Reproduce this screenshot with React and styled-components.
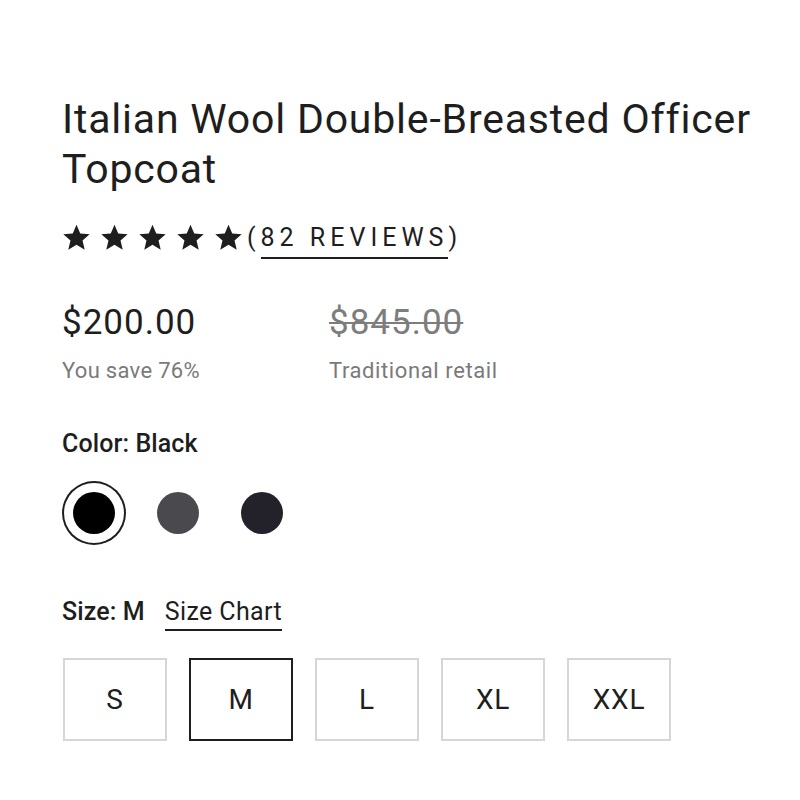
import React from 'react';
import styled, { createGlobalStyle } from 'styled-components';

const GlobalStyle = createGlobalStyle`
  body {
    margin: 0;
    background: #fff;
    font-family: Roboto, "Liberation Sans", sans-serif;
    color: #1e1e1e;
  }
`;

const Page = styled.div`
  padding: 94px 40px 0 62px;
`;

const Title = styled.h1`
  margin: 0;
  font-size: 41px;
  font-weight: 400;
  line-height: 50px;
  letter-spacing: 0.8px;
  color: #1e1e1e;
`;

const RatingRow = styled.div`
  display: flex;
  align-items: center;
  height: 29px;
  margin-top: 29px;
`;

const Stars = styled.div`
  display: flex;
  gap: 9px;
  svg {
    display: block;
    width: 29px;
    height: 29px;
    fill: #1e1e1e;
  }
`;

const Reviews = styled.span`
  font-size: 25px;
  line-height: 29px;
  letter-spacing: 5px;
  margin-left: 4px;
  span {
    border-bottom: 2px solid #1e1e1e;
    padding-bottom: 5px;
  }
`;

const Prices = styled.div`
  display: flex;
  margin-top: 49px;
`;

const PriceCol = styled.div`
  width: ${p => p.width}px;
`;

const Price = styled.div`
  font-size: 35px;
  line-height: 44px;
  letter-spacing: 1px;
  color: ${p => (p.old ? '#7d7d7d' : '#1e1e1e')};
  text-decoration: ${p => (p.old ? 'line-through' : 'none')};
  text-decoration-thickness: 2px;
`;

const PriceNote = styled.div`
  margin-top: 13px;
  font-size: 22px;
  line-height: 26px;
  letter-spacing: ${p => p.spacing || 0.3}px;
  color: #7a7a7a;
`;

const Label = styled.div`
  display: flex;
  align-items: baseline;
  gap: 20px;
  font-size: 25px;
  line-height: 30px;
  letter-spacing: 0.1px;
  font-weight: 500;
  margin-top: ${p => p.top}px;
`;

const Link = styled.span`
  font-weight: 400;
  letter-spacing: 0.4px;
  border-bottom: 2px solid #1e1e1e;
  padding-bottom: 2px;
`;

const Swatches = styled.div`
  display: flex;
  align-items: center;
  gap: 42px;
  margin-top: 33px;
`;

const Swatch = styled.div`
  width: 42px;
  height: 42px;
  border-radius: 50%;
  background: ${p => p.color};
  box-shadow: ${p => (p.selected ? '0 0 0 9px #fff, 0 0 0 11px #1e1e1e' : 'none')};
  margin-left: ${p => (p.selected ? '11px' : '0')};
`;

const Sizes = styled.div`
  display: flex;
  gap: 22px;
  margin-top: 27px;
  margin-left: 1px;
`;

const SizeBox = styled.div`
  width: 104px;
  height: 83px;
  box-sizing: border-box;
  display: flex;
  align-items: center;
  justify-content: center;
  font-size: 28px;
  letter-spacing: 0.8px;
  border: 2px solid ${p => (p.selected ? '#1e1e1e' : '#d6d6d6')};
`;

const Star = () => (
  <svg viewBox="0 0 24 24">
    <path d="M12 1.5l3.1 7.2 7.8.7-5.9 5.1 1.8 7.6L12 18.1l-6.8 4 1.8-7.6-5.9-5.1 7.8-.7z" />
  </svg>
);

export default function App() {
  return (
    <Page>
      <GlobalStyle />
      <Title>
        Italian Wool Double-Breasted Officer
        <br />
        Topcoat
      </Title>
      <RatingRow>
        <Stars>
          {[0, 1, 2, 3, 4].map(i => (
            <Star key={i} />
          ))}
        </Stars>
        <Reviews>
          (<span>82 REVIEWS</span>)
        </Reviews>
      </RatingRow>
      <Prices>
        <PriceCol width={267}>
          <Price>$200.00</Price>
          <PriceNote>You save 76%</PriceNote>
        </PriceCol>
        <PriceCol width={220}>
          <Price old>$845.00</Price>
          <PriceNote spacing={0.6}>Traditional retail</PriceNote>
        </PriceCol>
      </Prices>
      <Label top={45}>Color: Black</Label>
      <Swatches>
        <Swatch color="#000" selected />
        <Swatch color="#4a4a4e" />
        <Swatch color="#23222b" />
      </Swatches>
      <Label top={63}>
        Size: M <Link>Size Chart</Link>
      </Label>
      <Sizes>
        {['S', 'M', 'L', 'XL', 'XXL'].map(s => (
          <SizeBox key={s} selected={s === 'M'}>
            {s}
          </SizeBox>
        ))}
      </Sizes>
    </Page>
  );
}
